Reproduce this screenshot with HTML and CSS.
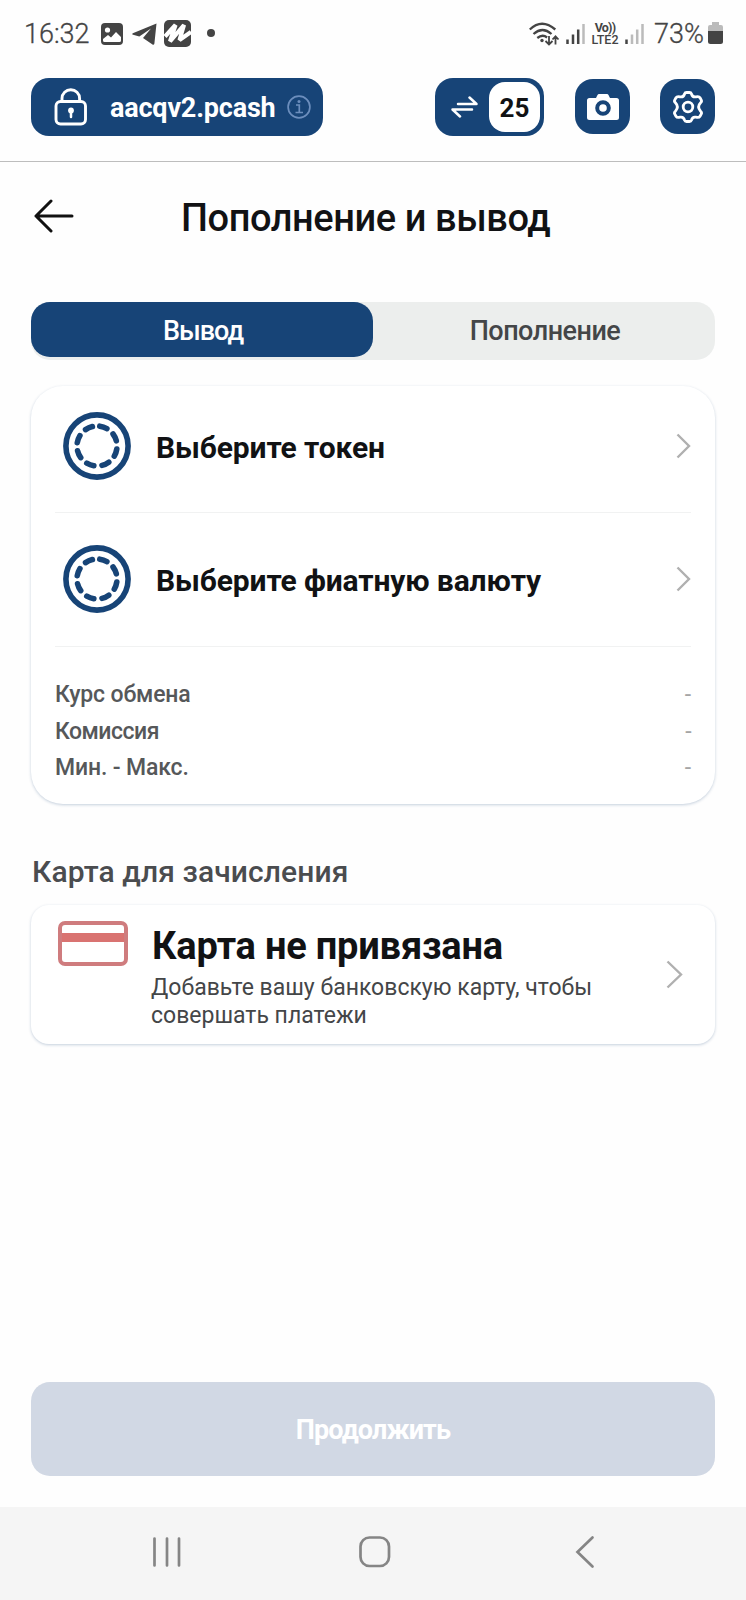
FILE: index.html
```
<!DOCTYPE html>
<html lang="ru">
<head>
    <meta charset="UTF-8">
    <title>Пополнение и вывод</title>
    <link rel="stylesheet" href="styles.css">
</head>
<body>

<div class="status-bar">
    <span class="clock">16:32</span>
    <svg class="status-image" width="22" height="22" viewBox="0 0 22 22">
        <rect width="22" height="22" rx="4" fill="#444"/>
        <circle cx="6.5" cy="7" r="2.6" fill="#fff"/>
        <path d="M2 17.5v-1.500l5-4 3 2.500 5-5.500 5 5v3.500q0 1.500-1.500 1.500h-15q-1.500 0-1.500-1.500z" fill="#fff"/>
    </svg>
    <svg class="status-telegram" width="25" height="22" viewBox="0 0 25 22">
        <path d="M24.500 0.500 0.800 10.200q-1.300 1 .3 1.600l6.200 1.700L19 5.500l-8 9.500 9.500 6.500q1.500.7 1.900-1z" fill="#444"/>
    </svg>
    <svg class="status-m" width="27" height="27" viewBox="0 0 27 27">
        <rect width="27" height="27" rx="5" fill="#444"/>
        <path d="M1 16.500 11.500 5 6 21.500 20 5 15.500 20 27 12" fill="none" stroke="#fff" stroke-width="4.200" stroke-linejoin="bevel"/>
    </svg>
    <span class="status-dot"></span>

    <svg class="status-wifi" width="31" height="24" viewBox="0 0 31 24">
        <g fill="none" stroke="#444" stroke-width="2.300">
            <path d="M.8 7.500q12-11.500 25.500 0"/>
            <path d="M4.500 12q9-8 18 0"/>
            <path d="M8.300 16q5.200-4.200 9.800-.5"/>
            <path d="M20 14v8M16.500 19l3.500 3.500 3.500-3.500M26.500 22.500v-8M23.500 17.500l3-3.200 3 3.200" stroke-width="1.800"/>
        </g>
        <circle cx="13" cy="18.500" r="1.700" fill="#444"/>
    </svg>
    <svg class="status-signal" width="19" height="20" viewBox="0 0 19 20">
        <path d="M1.500 15.500V20M7 10.500V20M12.200 5.500V20" stroke="#444" stroke-width="2.500"/>
        <path d="M17.500 0V20" stroke="#bbb" stroke-width="2.500"/>
    </svg>
    <span class="volte"><span class="vo">Vo))</span><span>LTE2</span></span>
    <svg class="status-signal-2" width="19" height="20" viewBox="0 0 19 20">
        <path d="M1.500 15.500V20" stroke="#444" stroke-width="2.500"/>
        <path d="M7 10.500V20M12.200 5.500V20M17.500 0V20" stroke="#bbb" stroke-width="2.500"/>
    </svg>
    <span class="battery-text">73%</span>
    <svg class="status-battery" width="15" height="22" viewBox="0 0 15 22">
        <path d="M4 0h7v3h2q2 0 2 2v5H0V5q0-2 2-2h2z" fill="#bbb"/>
        <path d="M0 9h15v10.500q0 2.500-2.500 2.500h-10Q0 22 0 19.500z" fill="#444"/>
    </svg>
</div>

<header class="top-bar">
    <div class="wallet">
        <svg width="34" height="38" viewBox="0 0 34 38" fill="none" stroke="#fff" stroke-width="2.900">
            <rect x="2" y="13.500" width="29.500" height="22.500" rx="4.500"/>
            <path d="M8 13.500V10.500a8.800 8.800 0 0 1 17.600 0v3"/>
            <circle cx="17" cy="22.500" r="2.900" fill="#fff" stroke="none"/>
            <path d="M17 23v6" stroke-linecap="round" stroke-width="2.500"/>
        </svg>
        <span class="wallet-name">aacqv2.pcash</span>
        <svg class="wallet-info" width="24" height="24" viewBox="0 0 24 24" fill="none" stroke="#6c8ebd" stroke-width="1.700">
            <circle cx="12" cy="12" r="10.900"/>
            <path d="M9 10h3.300v7.500M8.500 17.500h7.500"/>
            <circle cx="12" cy="6.500" r="1.500" fill="#6c8ebd" stroke="none"/>
        </svg>
    </div>

    <div class="swap">
        <svg width="28" height="22" viewBox="0 0 28 22" fill="none" stroke="#fff" stroke-width="2.500" stroke-linecap="round" stroke-linejoin="round">
            <path d="M7 8h18.500L18.500 1.500M21 13.500H1.500L9 20.500"/>
        </svg>
        <span class="swap-count">25</span>
    </div>
    <button class="icon-btn camera-btn" aria-label="Камера">
        <svg width="32" height="26" viewBox="0 0 32 26">
            <path d="M2.500 4H9l1.500-3Q11 0 12 0h8q1 0 1.500 1L23 4h6.500Q32 4 32 6.500v17q0 2.500-2.500 2.500h-27Q0 26 0 23.500v-17Q0 4 2.500 4z" fill="#fff"/>
            <circle cx="16" cy="14" r="5.800" fill="#fff" stroke="#174477" stroke-width="4"/>
        </svg>
    </button>
    <button class="icon-btn" aria-label="Настройки">
        <svg width="32" height="32" viewBox="0 0 32 32" fill="none" stroke="#fff" stroke-width="2.800" stroke-linejoin="round">
            <path d="M12.500 3Q13 1.500 14.500 1.500h3q1.500 0 2 1.500Q20.500 6.500 24 5.800q3-.8 4 1l1.200 2.100q.9 1.600-.6 2.900-4 4.200 0 8.400 1.500 1.300.6 2.900L28 25.200q-1 1.800-4 1-3.500-.7-4.500 2.800-.5 1.500-2 1.500h-3q-1.500 0-2-1.500-1-3.500-4.500-2.800-3 .8-4-1l-1.200-2.100q-.9-1.600.6-2.900 4-4.200 0-8.400-1.500-1.300-.6-2.900L4 6.800q1-1.800 4-1 3.500.7 4.500-2.800z"/>
            <circle cx="16" cy="16" r="4.800"/>
        </svg>
    </button>
</header>

<div class="page-head">
    <svg class="back" width="40" height="34" viewBox="0 0 40 34" fill="none" stroke="#111" stroke-width="3" stroke-linecap="round" stroke-linejoin="round">
        <path d="M38 17H2M17 2 2 17l15 15"/>
    </svg>
    <h1>Пополнение и вывод</h1>
</div>

<div class="tabs">
    <div class="tab active">Вывод</div>
    <div class="tab">Пополнение</div>
</div>

<div class="exchange-card">
    <div class="select-row">
        <svg class="coin" width="68" height="68" viewBox="0 0 68 68">
            <circle cx="34" cy="34" r="31.100"/>
            <circle class="coin-inner" cx="34" cy="34" r="20" transform="rotate(-82 34 34)"/>
        </svg>
        <span class="select-label">Выберите токен</span>
        <svg class="chevron" width="15" height="26" viewBox="0 0 15 26"><path d="M1.500 1.500 13 13 1.500 24.500"/></svg>
    </div>
    <div class="select-row second">
        <svg class="coin" width="68" height="68" viewBox="0 0 68 68">
            <circle cx="34" cy="34" r="31.100"/>
            <circle class="coin-inner" cx="34" cy="34" r="20" transform="rotate(-82 34 34)"/>
        </svg>
        <span class="select-label">Выберите фиатную валюту</span>
        <svg class="chevron" width="15" height="26" viewBox="0 0 15 26"><path d="M1.500 1.500 13 13 1.500 24.500"/></svg>
    </div>
    <div class="rates">
        <div class="rate"><span>Курс обмена</span><span class="dash">-</span></div>
        <div class="rate commission"><span>Комиссия</span><span class="dash">-</span></div>
        <div class="rate"><span>Мин. - Макс.</span><span class="dash">-</span></div>
    </div>
</div>

<h2>Карта для зачисления</h2>

<div class="bank-card">
    <svg class="bank-icon" width="70" height="45" viewBox="0 0 70 45">
        <rect x="2" y="2" width="66" height="41" rx="5" fill="none" stroke="#cf7c7e" stroke-width="4"/>
        <rect x="4" y="12" width="62" height="9" fill="#d97371"/>
    </svg>
    <div class="bank-text">
        <h3>Карта не привязана</h3>
        <p>Добавьте вашу банковскую карту, чтобы<br>совершать платежи</p>
    </div>
    <svg class="chevron" width="17" height="29" viewBox="0 0 17 29"><path d="M1.500 1.500 15 14.500 1.500 27.500"/></svg>
</div>

<button class="continue-btn" disabled>Продолжить</button>

<nav class="nav-bar">
    <svg width="30" height="32" viewBox="0 0 30 32"><path d="M2.500 2.500v27M15 2.500v27M27 2.500v27"/></svg>
    <svg class="nav-home" width="32" height="32" viewBox="0 0 32 32"><rect x="1.500" y="1.500" width="28.500" height="28.500" rx="9"/></svg>
    <svg width="20" height="34" viewBox="0 0 20 34"><path d="M17.500 2.500 2.500 17l15 14.500"/></svg>
</nav>

</body>
</html>
```
FILE: styles.css
```
* {
    box-sizing: border-box;
}
body {
    margin: 0;
    width: 746px;
    height: 1600px;
    display: flex;
    flex-direction: column;
    background: #fefefe;
    font-family: Roboto, sans-serif;
    color: #111214;
    overflow: hidden;
}
svg {
    display: block;
    flex-shrink: 0;
}
h1, h2, h3, p {
    margin: 0;
}
button {
    border: none;
    padding: 0;
    font-family: inherit;
}

/* phone status bar */
.status-bar {
    display: flex;
    align-items: center;
    height: 68px;
    padding: 0 23px 0 24px;
    color: #444;
    white-space: nowrap;
}
.clock {
    width: 77px;
    font-size: 27px;
    font-weight: 300;
    -webkit-text-stroke: 0.3px #444;
}
.status-telegram {
    margin-left: 9px;
}
.status-m {
    margin: -2px 0 0 7px;
}
.status-dot {
    width: 8px;
    height: 8px;
    margin: -2px auto 0 16px;
    border-radius: 50%;
    background: #444;
}
.status-signal {
    margin-left: 6px;
}
.volte {
    display: flex;
    flex-direction: column;
    align-items: center;
    width: 28px;
    margin: 0 6px;
    font-size: 12.500px;
    font-weight: 500;
    line-height: 12px;
}
.vo {
    font-weight: 700;
    letter-spacing: -0.8px;
}
.battery-text {
    width: 48px;
    margin: 0 5px 0 10px;
    font-size: 27px;
    font-weight: 300;
    -webkit-text-stroke: 0.3px #444;
}
.status-battery {
    margin: -2px 0 0 1px;
}

/* app header */
.top-bar {
    display: flex;
    align-items: center;
    height: 94px;
    padding: 9px 31px 25px;
    border-bottom: 1px solid #bdbdbd;
}
.wallet {
    display: flex;
    align-items: center;
    width: 292px;
    height: 58px;
    padding-left: 23px;
    border-radius: 18px;
    background: #174477;
    color: #fff;
}
.wallet-name {
    width: 168px;
    margin: 2px 0 0 22px;
    font-size: 27px;
    font-weight: 700;
    letter-spacing: -0.2px;
    white-space: nowrap;
}
.wallet-info {
    margin-left: 9px;
}
.swap {
    display: flex;
    align-items: center;
    justify-content: space-between;
    width: 109px;
    height: 58px;
    margin-left: auto;
    padding: 0 4px 0 16px;
    border-radius: 18px;
    background: #174477;
}
.swap-count {
    width: 51px;
    height: 50px;
    border-radius: 16px;
    background: #fff;
    font-size: 26px;
    font-weight: 700;
    line-height: 53px;
    text-align: center;
}
.icon-btn {
    display: flex;
    align-items: center;
    justify-content: center;
    width: 55px;
    height: 55px;
    margin-left: 30px;
    border-radius: 18px;
    background: #174477;
}
.camera-btn {
    margin-left: 31px;
}

.page-head {
    display: flex;
    align-items: center;
    height: 112px;
    padding: 0 34px;
}
.back {
    margin-top: -4px;
}
h1 {
    margin-left: 107px;
    font-size: 38px;
    font-weight: 500;
    letter-spacing: -0.43px;
    white-space: nowrap;
}

/* tabs */
.tabs {
    display: flex;
    height: 58px;
    margin: 28px 31px 0;
    border-radius: 19px;
    background: #eceeed;
}
.tab {
    width: 50%;
    padding-left: 2px;
    color: #444648;
    font-size: 27px;
    font-weight: 500;
    letter-spacing: -0.5px;
    line-height: 58px;
    text-align: center;
}
.tab.active {
    height: 55px;
    border-radius: 19px;
    background: #174477;
    color: #fff;
    letter-spacing: -1px;
}

/* token and currency */
.exchange-card {
    height: 418px;
    margin: 26px 31px 0;
    padding: 0 24px;
    border-radius: 32px;
    background: #fff;
    box-shadow: 0 1px 3px rgba(23, 68, 119, 0.25);
}
.select-row {
    display: flex;
    align-items: center;
    height: 127px;
    padding: 0 0 7px 8px;
    border-bottom: 1px solid #f1f2f2;
}
.select-row.second {
    height: 134px;
    padding-bottom: 1px;
}
.select-label {
    margin: 3px auto 0 25px;
    font-size: 30px;
    font-weight: 700;
    letter-spacing: -0.13px;
    white-space: nowrap;
}
.coin {
    fill: none;
    stroke: #174477;
    stroke-width: 5.600;
}
.coin-inner {
    stroke-linecap: round;
    stroke-dasharray: 7.500 8.208;
}
.chevron {
    fill: none;
    stroke: #b0b0b0;
    stroke-width: 2.400;
}
.rates {
    padding-top: 30px;
}
.rate {
    display: flex;
    justify-content: space-between;
    height: 36.500px;
    color: #56585a;
    font-size: 23px;
    font-weight: 500;
    letter-spacing: -0.15px;
    line-height: 36.500px;
}
.commission {
    letter-spacing: -0.5px;
}
.dash {
    color: #a5a5a5;
    font-weight: 400;
}

h2 {
    height: 101px;
    padding: 49px 0 0 32px;
    font-size: 30px;
    font-weight: 500;
    letter-spacing: 0.1px;
    line-height: 37px;
    color: #4a4c4f;
}

/* linked card */
.bank-card {
    display: flex;
    align-items: center;
    height: 139px;
    margin: 0 31px;
    padding: 0 32px 0 27px;
    border-radius: 18px;
    background: #fff;
    box-shadow: 0 1px 3px rgba(23, 68, 119, 0.25);
}
.bank-icon {
    align-self: flex-start;
    margin-top: 16px;
}
.bank-text {
    align-self: flex-start;
    margin: 18px auto 0 23px;
    white-space: nowrap;
}
h3 {
    height: 51px;
    margin-left: 1px;
    font-size: 38px;
    font-weight: 700;
    letter-spacing: -0.2px;
    line-height: 46px;
}
p {
    color: #444648;
    font-size: 23px;
    line-height: 27.500px;
}

.continue-btn {
    height: 94px;
    margin: auto 31px 31px;
    padding-top: 2px;
    border-radius: 19px;
    background: #d1d8e4;
    color: #fff;
    font-size: 27px;
    font-weight: 700;
    letter-spacing: -0.9px;
}

/* phone navigation */
.nav-bar {
    display: flex;
    align-items: center;
    justify-content: space-between;
    height: 93px;
    padding: 0 151px 3px 152px;
    background: #f5f5f5;
}
.nav-bar svg {
    fill: none;
    stroke: #858585;
    stroke-width: 2.700;
    stroke-linecap: round;
}
.nav-bar .nav-home {
    margin-right: 7px;
}
```
